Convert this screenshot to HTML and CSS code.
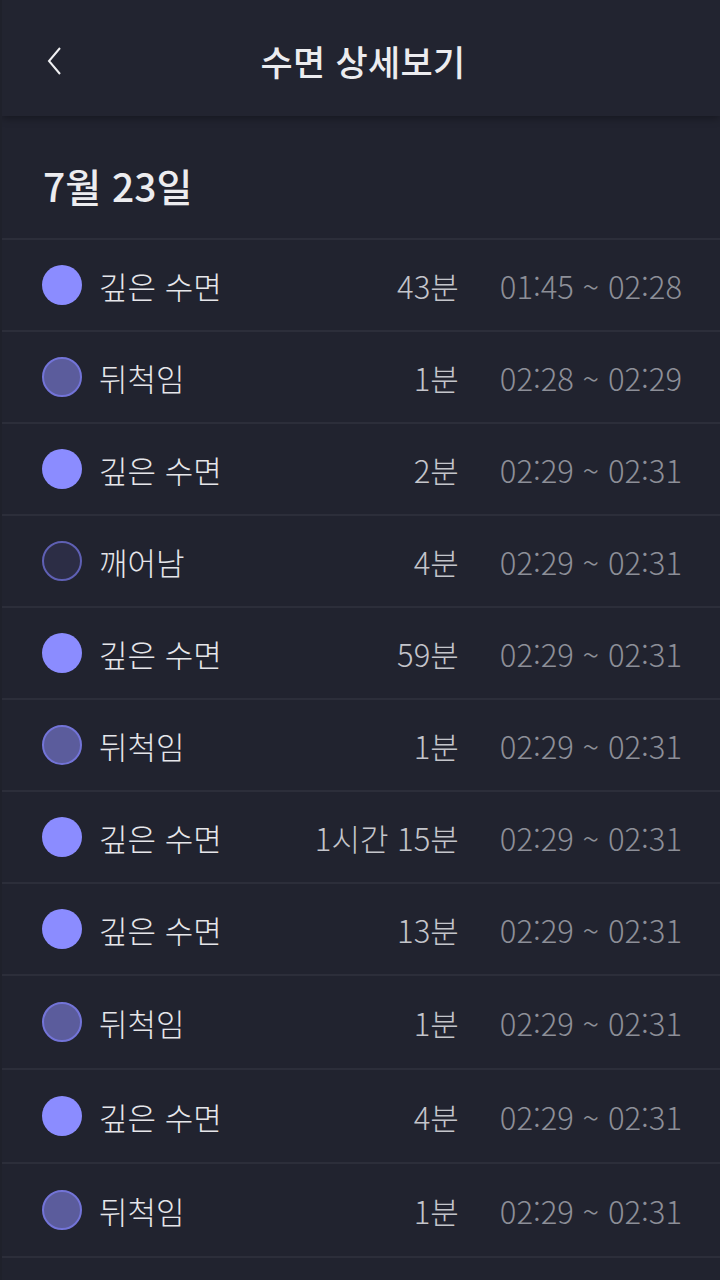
FILE: index.html
```html
<!DOCTYPE html>
<html lang="ko">
<head>
<meta charset="utf-8">
<link rel="stylesheet" href="styles.css">
</head>
<body>
<div class="screen">
  <header class="appbar">
    <button class="back" aria-label="뒤로">
      <svg width="16" height="30" viewBox="0 0 16 30"><path d="M14 2 L3 15 L14 28" fill="none" stroke="#f0f0f2" stroke-width="2" stroke-linejoin="miter"/></svg>
    </button>
    <h1 class="title">수면 상세보기</h1>
  </header>
  <h2 class="date">7월 23일</h2>
  <ul class="list">
    <li class="row"><span class="dot deep"></span><span class="label">깊은 수면</span><span class="dur">43분</span><span class="time">01:45 ~ 02:28</span></li>
    <li class="row"><span class="dot toss"></span><span class="label">뒤척임</span><span class="dur">1분</span><span class="time">02:28 ~ 02:29</span></li>
    <li class="row"><span class="dot deep"></span><span class="label">깊은 수면</span><span class="dur">2분</span><span class="time">02:29 ~ 02:31</span></li>
    <li class="row"><span class="dot awake"></span><span class="label">깨어남</span><span class="dur">4분</span><span class="time">02:29 ~ 02:31</span></li>
    <li class="row"><span class="dot deep"></span><span class="label">깊은 수면</span><span class="dur">59분</span><span class="time">02:29 ~ 02:31</span></li>
    <li class="row"><span class="dot toss"></span><span class="label">뒤척임</span><span class="dur">1분</span><span class="time">02:29 ~ 02:31</span></li>
    <li class="row"><span class="dot deep"></span><span class="label">깊은 수면</span><span class="dur">1시간 15분</span><span class="time">02:29 ~ 02:31</span></li>
    <li class="row"><span class="dot deep"></span><span class="label">깊은 수면</span><span class="dur">13분</span><span class="time">02:29 ~ 02:31</span></li>
    <li class="row tall"><span class="dot toss"></span><span class="label">뒤척임</span><span class="dur">1분</span><span class="time">02:29 ~ 02:31</span></li>
    <li class="row tall"><span class="dot deep"></span><span class="label">깊은 수면</span><span class="dur">4분</span><span class="time">02:29 ~ 02:31</span></li>
    <li class="row tall"><span class="dot toss"></span><span class="label">뒤척임</span><span class="dur">1분</span><span class="time">02:29 ~ 02:31</span></li>
  </ul>
</div>
</body>
</html>
```
FILE: styles.css
```css
* { box-sizing: border-box; }
html, body {
  margin: 0;
  padding: 0;
  background: #1f212b;
}
body {
  font-family: "Noto Sans CJK KR", "Noto Sans", sans-serif;
  color: #ececef;
}
.screen {
  margin-left: 2px;
  width: 718px;
  height: 1280px;
  background: #21232f;
  overflow: hidden;
}
.appbar {
  height: 116px;
  background: #222430;
  box-shadow: 0 2px 8px rgba(0, 0, 0, 0.35);
  display: flex;
  align-items: center;
  justify-content: center;
  position: relative;
}
.back {
  position: absolute;
  left: 44px;
  top: 46px;
  padding: 0;
  border: 0;
  background: none;
  width: 16px;
  height: 30px;
  display: flex;
}
.title {
  margin: 4px 0 0 4px;
  font-size: 35px;
  font-weight: 500;
  color: #ececef;
  letter-spacing: 0.3px;
}
.date {
  margin: 0;
  height: 122px;
  padding: 43px 0 0 41px;
  font-size: 39px;
  font-weight: 500;
  line-height: 52px;
  color: #ececef;
}
.list {
  list-style: none;
  margin: 0;
  padding: 0;
  border-top: 2px solid #2c2e3a;
}
.row {
  height: 92px;
  border-bottom: 2px solid #2c2e3a;
  display: flex;
  align-items: center;
  padding: 0 38px 0 40px;
  font-weight: 300;
  font-size: 31px;
}
.row.tall { height: 94px; }
.dot {
  width: 40px;
  height: 40px;
  border-radius: 50%;
  flex: none;
}
.dot.deep { background: #8b8cff; }
.dot.toss { background: #5b5c9c; border: 2px solid #7374d8; }
.dot.awake { background: #2c2d45; border: 2px solid #5f60b4; }
.label {
  margin-left: 17px;
  flex: 1;
  color: #e6e6ea;
}
.dur {
  color: #c4c5cb;
}
.time {
  margin-left: 41px;
  color: #8d8f98;
}
```
